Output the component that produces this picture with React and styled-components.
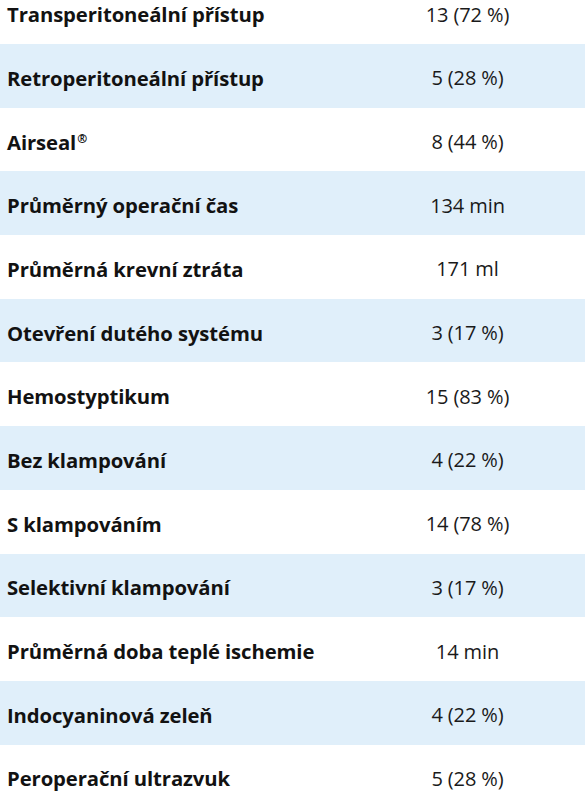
import React from "react";
import styled, { createGlobalStyle } from "styled-components";

const Global = createGlobalStyle`
  html, body { margin: 0; padding: 0; background: #ffffff; }
  body { font-family: "Open Sans", Lato, sans-serif; color: #141414; font-variant-ligatures: none; }
`;

const Table = styled.table`
  width: 585px;
  border-collapse: collapse;
  table-layout: fixed;
  margin-top: -19.7px;
`;

const Row = styled.tr`
  height: 63.7px;
  background: ${(p) => (p.$shaded ? "#e0effa" : "#ffffff")};
`;

const Label = styled.td`
  width: 343px;
  padding: 4px 0 0 7px;
  font-weight: 700;
  font-size: 20.3px;
  letter-spacing: -0.1px;
  color: #121212;
  white-space: nowrap;
  vertical-align: middle;
`;

const Value = styled.td`
  padding: 4px 0 0 0;
  font-weight: 400;
  font-size: 20px;
  letter-spacing: -0.1px;
  color: #1a1a1a;
  text-align: center;
  vertical-align: middle;
  white-space: nowrap;
`;

const Sup = styled.sup`
  font-size: 12px;
  vertical-align: 7px;
  line-height: 0;
  margin-left: 1px;
`;

const rows = [
  ["Transperitoneální přístup", "13 (72 %)"],
  ["Retroperitoneální přístup", "5 (28 %)"],
  ["Airseal", "8 (44 %)", true],
  ["Průměrný operační čas", "134 min"],
  ["Průměrná krevní ztráta", "171 ml"],
  ["Otevření dutého systému", "3 (17 %)"],
  ["Hemostyptikum", "15 (83 %)"],
  ["Bez klampování", "4 (22 %)"],
  ["S klampováním", "14 (78 %)"],
  ["Selektivní klampování", "3 (17 %)"],
  ["Průměrná doba teplé ischemie", "14 min"],
  ["Indocyaninová zeleň", "4 (22 %)"],
  ["Peroperační ultrazvuk", "5 (28 %)"],
];

export default function App() {
  return (
    <>
      <Global />
      <Table>
        <tbody>
          {rows.map(([label, value, reg], i) => (
            <Row key={label} $shaded={i % 2 === 1}>
              <Label>
                {label}
                {reg && <Sup>®</Sup>}
              </Label>
              <Value>{value}</Value>
            </Row>
          ))}
        </tbody>
      </Table>
    </>
  );
}
